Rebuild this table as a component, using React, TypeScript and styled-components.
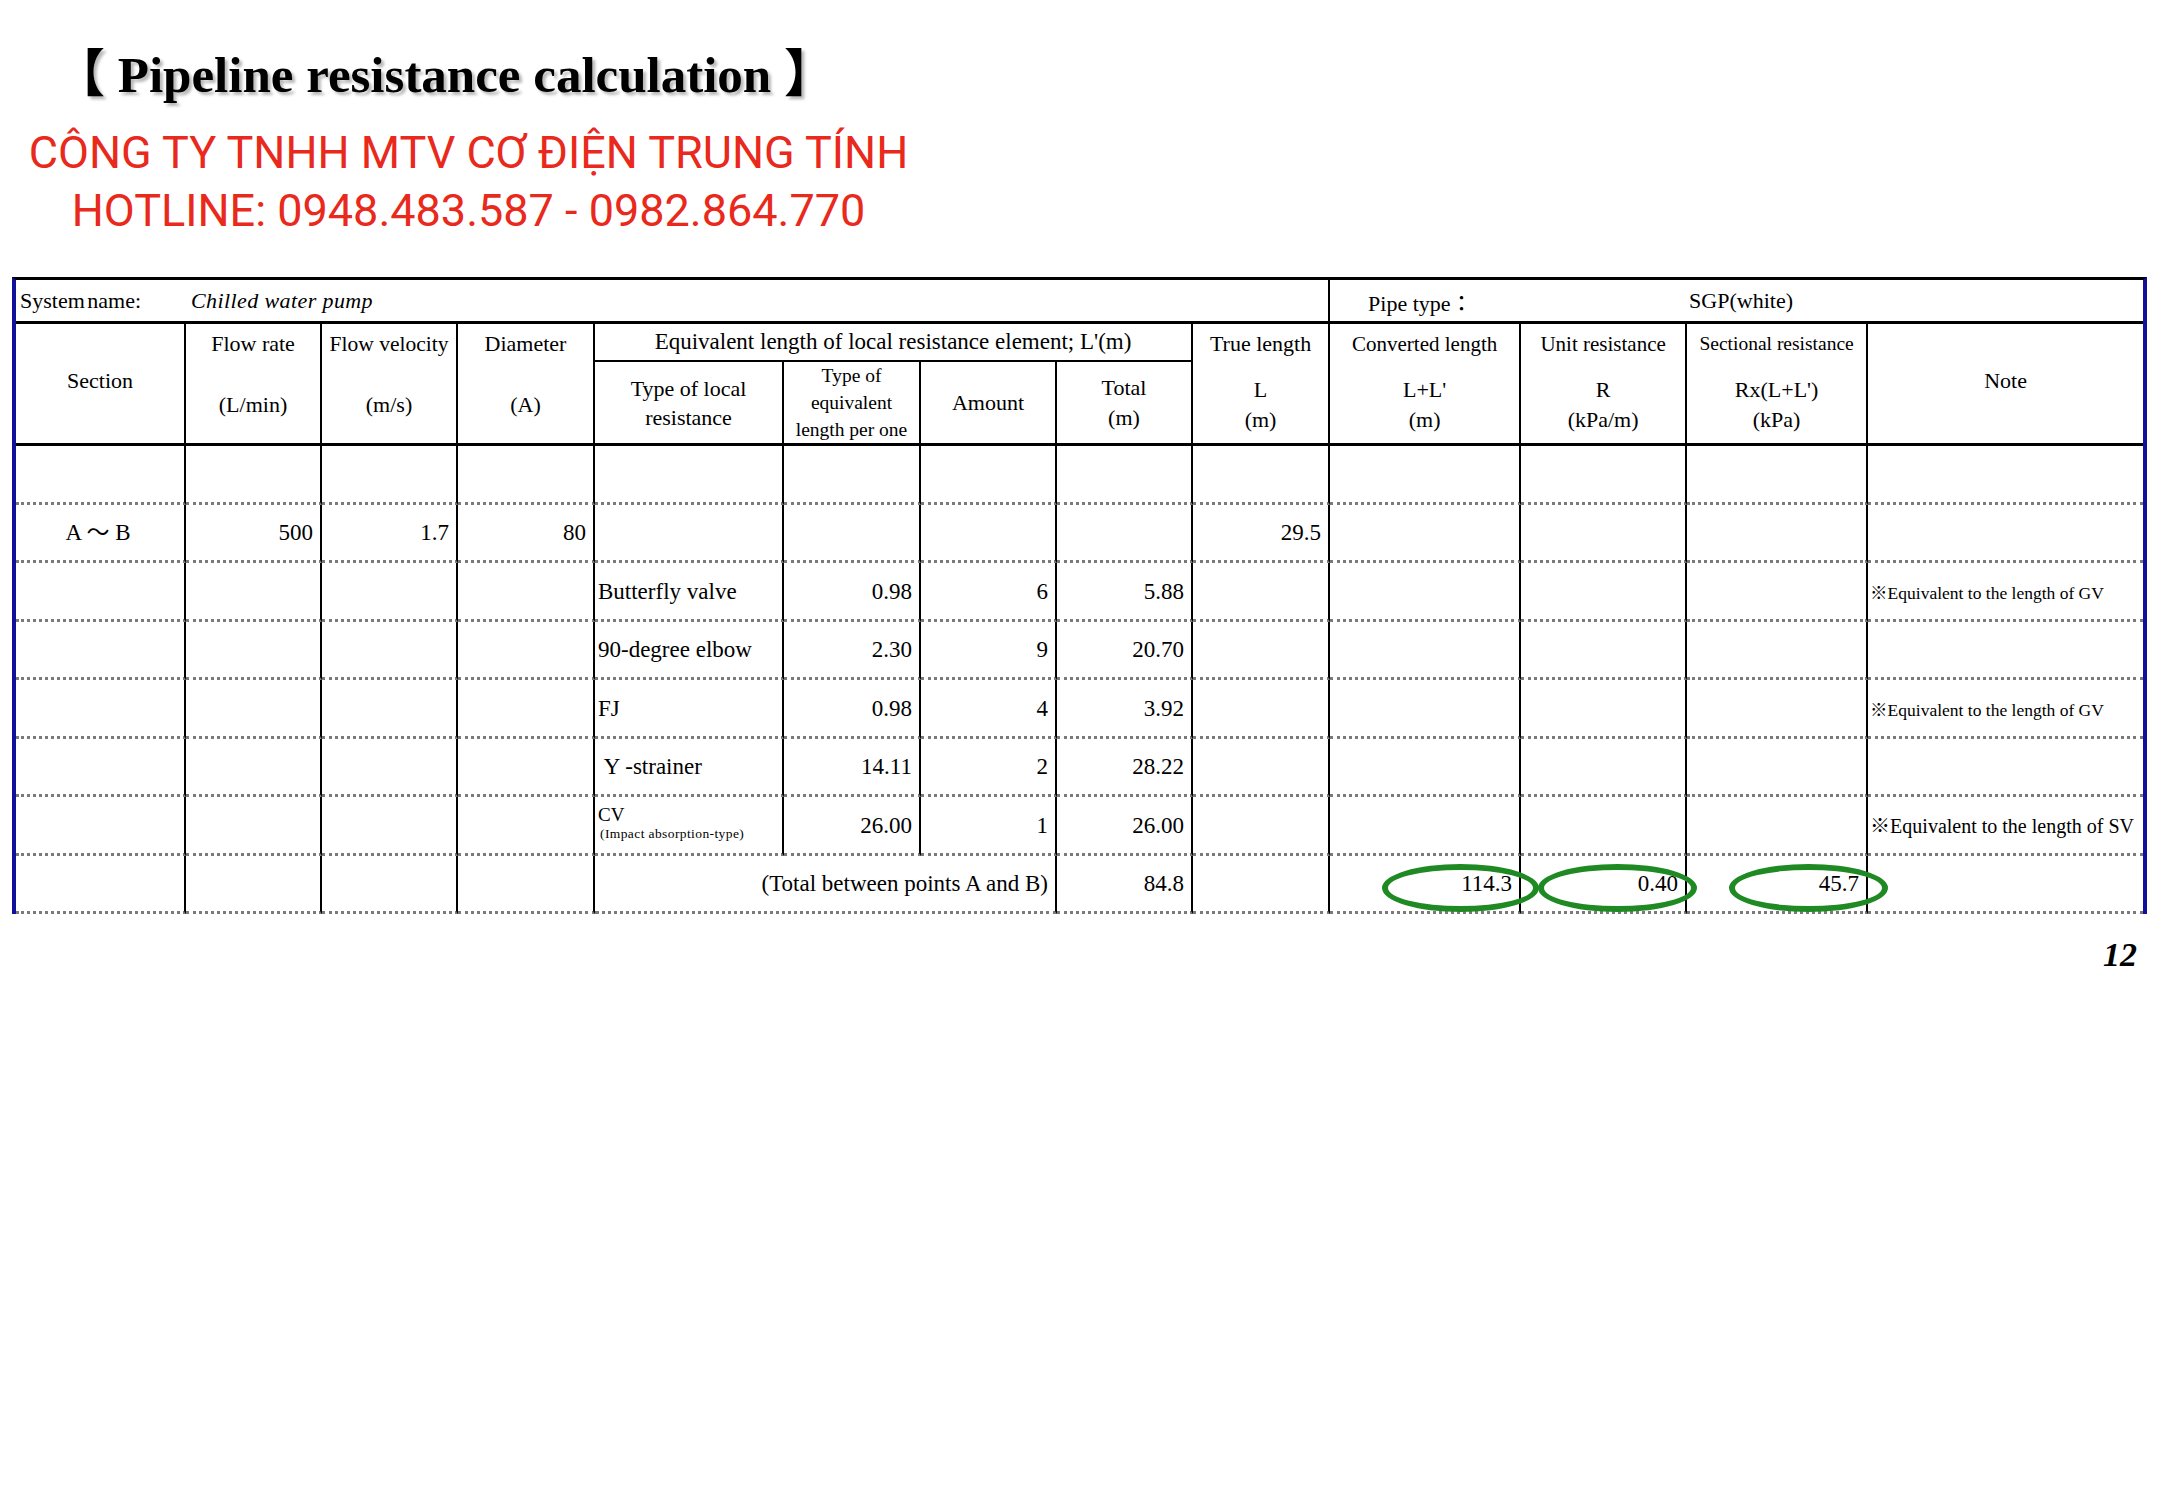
import React from "react";
import styled, { createGlobalStyle } from "styled-components";

const GlobalStyle = createGlobalStyle`
  html, body { margin: 0; padding: 0; background: #fff; }
  body { font-family: "Liberation Serif", "Noto Sans CJK JP", serif; color: #000; }
`;

const Page = styled.div`
  width: 2167px;
  min-height: 1500px;
  padding-top: 46px;
  box-sizing: border-box;
`;

const Title = styled.h1`
  margin: 0 0 0 54px;
  font: bold 51px/58px "Liberation Serif", "Noto Sans CJK JP", serif;
  text-shadow: 3px 3px 3px rgba(0, 0, 0, 0.28);
  white-space: nowrap;
`;

const Company = styled.div`
  width: 937px;
  margin-top: 20px;
  text-align: center;
  color: #e8291c;
  font: 45px/58px Roboto, "Noto Sans", sans-serif;
  white-space: nowrap;
`;

const Sheet = styled.table`
  margin: 37px 0 0 12px;
  width: 2135px;
  table-layout: fixed;
  border-collapse: separate;
  border-spacing: 0;
  border-left: 4px solid #10109a;
  border-right: 4px solid #10109a;
  border-top: 3px solid #000;
  font-family: "Liberation Serif", "Noto Sans CJK JP", serif;
`;

const Col = styled.col<{ $w: number }>`
  width: ${(p) => p.$w}px;
`;

const Row = styled.tr<{ $h: number }>`
  height: ${(p) => p.$h}px;
`;

const InfoCell = styled.td<{ $pad: number; $edge?: boolean }>`
  padding: 0 0 0 ${(p) => p.$pad}px;
  border-right: ${(p) => (p.$edge ? "none" : "2px solid #000")};
  border-bottom: 3px solid #000;
  font-size: 22px;
  text-align: left;
  vertical-align: middle;
  white-space: nowrap;
`;

const InfoLabel = styled.span`
  display: inline-block;
  width: 171px;
  word-spacing: -3px;
`;

const InfoValue = styled.span`
  font-style: italic;
  letter-spacing: 0.4px;
`;

const Th = styled.th<{
  $thin?: boolean;
  $edge?: boolean;
  $top?: boolean;
  $lift?: boolean;
  $size?: number;
  $lh?: number;
}>`
  padding: 0 2px ${(p) => (p.$lift ? 6 : 0)}px;
  font-weight: normal;
  font-size: ${(p) => p.$size ?? 22}px;
  line-height: ${(p) => p.$lh ?? 30}px;
  text-align: center;
  vertical-align: ${(p) => (p.$top ? "top" : "middle")};
  border-right: ${(p) => (p.$edge ? "none" : "2px solid #000")};
  border-bottom: ${(p) => (p.$thin ? "2px solid #000" : "3px solid #000")};
  white-space: nowrap;
`;

const HeadText = styled.div`
  padding-top: 5px;
`;

const HeadLower = styled.div<{ $gap: number }>`
  margin-top: ${(p) => p.$gap}px;
  font-size: 22px;
`;

const Td = styled.td<{ $align?: "left" | "right" | "center"; $edge?: boolean }>`
  position: relative;
  padding: 2px 7px 0 3px;
  border-right: ${(p) => (p.$edge ? "none" : "2px solid #000")};
  border-bottom: 3px dotted #7a7a7a;
  text-align: ${(p) => p.$align ?? "right"};
  vertical-align: middle;
  font-size: 23px;
  line-height: 1.2;
  white-space: nowrap;
`;

const NoteText = styled.span<{ $size: number }>`
  font-size: ${(p) => p.$size}px;
  margin-left: -1px;
`;

const CvMain = styled.div`
  font-size: 19px;
  line-height: 22px;
  margin-top: -6px;
`;

const CvSub = styled.div`
  font-size: 13.5px;
  line-height: 16px;
  letter-spacing: 0.4px;
  padding-left: 2px;
`;

const Ring = styled.span<{ $left: number; $width: number }>`
  position: absolute;
  top: 8px;
  left: ${(p) => p.$left}px;
  width: ${(p) => p.$width}px;
  height: 48px;
  box-sizing: border-box;
  border: 6px solid #1f8a23;
  border-radius: 50%;
  pointer-events: none;
`;

const PageNo = styled.div`
  margin-top: 24px;
  padding-right: 30px;
  text-align: right;
  font: italic bold 34px/34px "Liberation Serif", serif;
`;

const widths = [170, 136, 136, 137, 189, 137, 136, 136, 137, 191, 166, 181, 275];

type DataRow = {
  section?: string;
  flow?: string;
  vel?: string;
  dia?: string;
  type?: React.ReactNode;
  per?: string;
  amount?: string;
  total?: string;
  trueLen?: string;
  note?: React.ReactNode;
};

const gv = <NoteText $size={17.5}>※Equivalent to the length of GV</NoteText>;
const sv = <NoteText $size={20}>※Equivalent to the length of SV</NoteText>;

const rows: DataRow[] = [
  {},
  { section: "A ～ B", flow: "500", vel: "1.7", dia: "80", trueLen: "29.5" },
  { type: "Butterfly valve", per: "0.98", amount: "6", total: "5.88", note: gv },
  { type: "90-degree elbow", per: "2.30", amount: "9", total: "20.70" },
  { type: "FJ", per: "0.98", amount: "4", total: "3.92", note: gv },
  { type: "\u00a0Y -strainer", per: "14.11", amount: "2", total: "28.22" },
  {
    type: (
      <>
        <CvMain>CV</CvMain>
        <CvSub>(Impact absorption-type)</CvSub>
      </>
    ),
    per: "26.00",
    amount: "1",
    total: "26.00",
    note: sv,
  },
];

export default function App() {
  return (
    <Page>
      <GlobalStyle />
      <Title>【 Pipeline resistance calculation 】</Title>
      <Company>
        <div>CÔNG TY TNHH MTV CƠ ĐIỆN TRUNG TÍNH</div>
        <div>HOTLINE: 0948.483.587 - 0982.864.770</div>
      </Company>
      <Sheet>
        <colgroup>
          {widths.map((w, i) => (
            <Col key={i} $w={w} />
          ))}
        </colgroup>
        <thead>
          <Row $h={44}>
            <InfoCell colSpan={9} $pad={4}>
              <InfoLabel>System name:</InfoLabel>
              <InfoValue>Chilled water pump</InfoValue>
            </InfoCell>
            <InfoCell colSpan={2} $pad={38} $edge>
              Pipe type：
            </InfoCell>
            <InfoCell colSpan={2} $pad={2} $edge>
              SGP(white)
            </InfoCell>
          </Row>
          <Row $h={38}>
            <Th rowSpan={2} $lift>
              Section
            </Th>
            <Th rowSpan={2} $top>
              <HeadText>
                Flow rate
                <HeadLower $gap={31}>(L/min)</HeadLower>
              </HeadText>
            </Th>
            <Th rowSpan={2} $top $size={21.5}>
              <HeadText>
                Flow velocity
                <HeadLower $gap={31}>(m/s)</HeadLower>
              </HeadText>
            </Th>
            <Th rowSpan={2} $top>
              <HeadText>
                Diameter
                <HeadLower $gap={31}>(A)</HeadLower>
              </HeadText>
            </Th>
            <Th colSpan={4} $thin $size={23}>
              Equivalent length of local resistance element; L'(m)
            </Th>
            <Th rowSpan={2} $top>
              <HeadText>
                True length
                <HeadLower $gap={16}>
                  L<br />
                  (m)
                </HeadLower>
              </HeadText>
            </Th>
            <Th rowSpan={2} $top $size={21}>
              <HeadText>
                Converted length
                <HeadLower $gap={16}>
                  L+L'
                  <br />
                  (m)
                </HeadLower>
              </HeadText>
            </Th>
            <Th rowSpan={2} $top $size={21}>
              <HeadText>
                Unit resistance
                <HeadLower $gap={16}>
                  R<br />
                  (kPa/m)
                </HeadLower>
              </HeadText>
            </Th>
            <Th rowSpan={2} $top $size={19.5}>
              <HeadText>
                Sectional resistance
                <HeadLower $gap={16}>
                  Rx(L+L')
                  <br />
                  (kPa)
                </HeadLower>
              </HeadText>
            </Th>
            <Th rowSpan={2} $edge $lift>
              Note
            </Th>
          </Row>
          <Row $h={83}>
            <Th $lh={29}>
              Type of local
              <br />
              resistance
            </Th>
            <Th $size={19.5} $lh={27}>
              Type of
              <br />
              equivalent
              <br />
              length per one
            </Th>
            <Th>Amount</Th>
            <Th>
              Total
              <br />
              (m)
            </Th>
          </Row>
        </thead>
        <tbody>
          {rows.map((r, i) => (
            <Row key={i} $h={58.5}>
              <Td $align="center">{r.section}</Td>
              <Td>{r.flow}</Td>
              <Td>{r.vel}</Td>
              <Td>{r.dia}</Td>
              <Td $align="left">{r.type}</Td>
              <Td>{r.per}</Td>
              <Td>{r.amount}</Td>
              <Td>{r.total}</Td>
              <Td>{r.trueLen}</Td>
              <Td />
              <Td />
              <Td />
              <Td $align="left" $edge>
                {r.note}
              </Td>
            </Row>
          ))}
          <Row $h={58.5}>
            <Td />
            <Td />
            <Td />
            <Td />
            <Td colSpan={3}>(Total between points A and B)</Td>
            <Td>84.8</Td>
            <Td />
            <Td>
              <Ring $left={52} $width={157} />
              114.3
            </Td>
            <Td>
              <Ring $left={17} $width={159} />
              0.40
            </Td>
            <Td>
              <Ring $left={42} $width={159} />
              45.7
            </Td>
            <Td $edge />
          </Row>
        </tbody>
      </Sheet>
      <PageNo>12</PageNo>
    </Page>
  );
}
